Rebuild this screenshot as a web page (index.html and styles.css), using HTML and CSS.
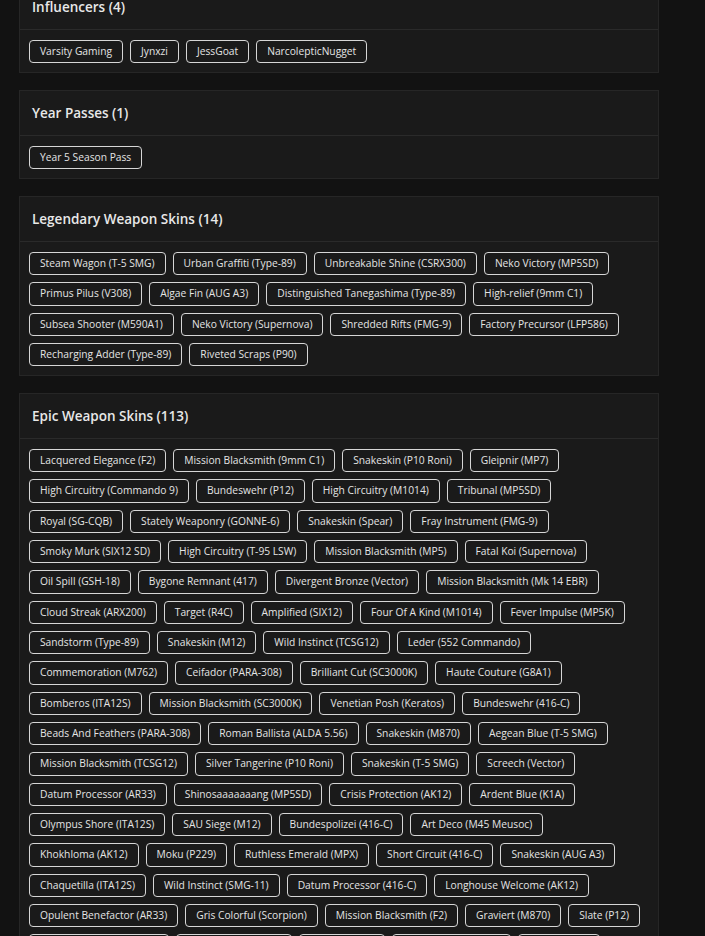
FILE: index.html
```html
<!DOCTYPE html>
<html lang="en">
<head>
  <meta charset="UTF-8" />
  <meta name="viewport" content="width=device-width, initial-scale=1.0" />
  <title>Inventory</title>
  <link rel="stylesheet" href="styles.css">
</head>
<body>
  <div class="wrap">

    <div class="card">
      <div class="card-head"><h2>Influencers (4)</h2></div>
      <div class="tags">
        <span class="tag">Varsity Gaming</span>
        <span class="tag">Jynxzi</span>
        <span class="tag">JessGoat</span>
        <span class="tag">NarcolepticNugget</span>
      </div>
    </div>

    <div class="card">
      <div class="card-head"><h2>Year Passes (1)</h2></div>
      <div class="tags">
        <span class="tag">Year 5 Season Pass</span>
      </div>
    </div>

    <div class="card">
      <div class="card-head"><h2>Legendary Weapon Skins (14)</h2></div>
      <div class="tags">
        <span class="tag">Steam Wagon (T-5 SMG)</span>
        <span class="tag">Urban Graffiti (Type-89)</span>
        <span class="tag">Unbreakable Shine (CSRX300)</span>
        <span class="tag">Neko Victory (MP5SD)</span>
        <span class="tag">Primus Pilus (V308)</span>
        <span class="tag">Algae Fin (AUG A3)</span>
        <span class="tag">Distinguished Tanegashima (Type-89)</span>
        <span class="tag">High-relief (9mm C1)</span>
        <span class="tag">Subsea Shooter (M590A1)</span>
        <span class="tag">Neko Victory (Supernova)</span>
        <span class="tag">Shredded Rifts (FMG-9)</span>
        <span class="tag">Factory Precursor (LFP586)</span>
        <span class="tag">Recharging Adder (Type-89)</span>
        <span class="tag">Riveted Scraps (P90)</span>
      </div>
    </div>

    <div class="card">
      <div class="card-head"><h2>Epic Weapon Skins (113)</h2></div>
      <div class="tags">
        <span class="tag">Lacquered Elegance (F2)</span>
        <span class="tag">Mission Blacksmith (9mm C1)</span>
        <span class="tag">Snakeskin (P10 Roni)</span>
        <span class="tag">Gleipnir (MP7)</span>
        <span class="tag">High Circuitry (Commando 9)</span>
        <span class="tag">Bundeswehr (P12)</span>
        <span class="tag">High Circuitry (M1014)</span>
        <span class="tag">Tribunal (MP5SD)</span>
        <span class="tag">Royal (SG-CQB)</span>
        <span class="tag">Stately Weaponry (GONNE-6)</span>
        <span class="tag">Snakeskin (Spear)</span>
        <span class="tag">Fray Instrument (FMG-9)</span>
        <span class="tag">Smoky Murk (SIX12 SD)</span>
        <span class="tag">High Circuitry (T-95 LSW)</span>
        <span class="tag">Mission Blacksmith (MP5)</span>
        <span class="tag">Fatal Koi (Supernova)</span>
        <span class="tag">Oil Spill (GSH-18)</span>
        <span class="tag">Bygone Remnant (417)</span>
        <span class="tag">Divergent Bronze (Vector)</span>
        <span class="tag">Mission Blacksmith (Mk 14 EBR)</span>
        <span class="tag">Cloud Streak (ARX200)</span>
        <span class="tag">Target (R4C)</span>
        <span class="tag">Amplified (SIX12)</span>
        <span class="tag">Four Of A Kind (M1014)</span>
        <span class="tag">Fever Impulse (MP5K)</span>
        <span class="tag">Sandstorm (Type-89)</span>
        <span class="tag">Snakeskin (M12)</span>
        <span class="tag">Wild Instinct (TCSG12)</span>
        <span class="tag">Leder (552 Commando)</span>
        <span class="tag">Commemoration (M762)</span>
        <span class="tag">Ceifador (PARA-308)</span>
        <span class="tag">Brilliant Cut (SC3000K)</span>
        <span class="tag">Haute Couture (G8A1)</span>
        <span class="tag">Bomberos (ITA12S)</span>
        <span class="tag">Mission Blacksmith (SC3000K)</span>
        <span class="tag">Venetian Posh (Keratos)</span>
        <span class="tag">Bundeswehr (416-C)</span>
        <span class="tag">Beads And Feathers (PARA-308)</span>
        <span class="tag">Roman Ballista (ALDA 5.56)</span>
        <span class="tag">Snakeskin (M870)</span>
        <span class="tag">Aegean Blue (T-5 SMG)</span>
        <span class="tag">Mission Blacksmith (TCSG12)</span>
        <span class="tag">Silver Tangerine (P10 Roni)</span>
        <span class="tag">Snakeskin (T-5 SMG)</span>
        <span class="tag">Screech (Vector)</span>
        <span class="tag">Datum Processor (AR33)</span>
        <span class="tag">Shinosaaaaaaang (MP5SD)</span>
        <span class="tag">Crisis Protection (AK12)</span>
        <span class="tag">Ardent Blue (K1A)</span>
        <span class="tag">Olympus Shore (ITA12S)</span>
        <span class="tag">SAU Siege (M12)</span>
        <span class="tag">Bundespolizei (416-C)</span>
        <span class="tag">Art Deco (M45 Meusoc)</span>
        <span class="tag">Khokhloma (AK12)</span>
        <span class="tag">Moku (P229)</span>
        <span class="tag">Ruthless Emerald (MPX)</span>
        <span class="tag">Short Circuit (416-C)</span>
        <span class="tag">Snakeskin (AUG A3)</span>
        <span class="tag">Chaquetilla (ITA12S)</span>
        <span class="tag">Wild Instinct (SMG-11)</span>
        <span class="tag">Datum Processor (416-C)</span>
        <span class="tag">Longhouse Welcome (AK12)</span>
        <span class="tag">Opulent Benefactor (AR33)</span>
        <span class="tag">Gris Colorful (Scorpion)</span>
        <span class="tag">Mission Blacksmith (F2)</span>
        <span class="tag">Graviert (M870)</span>
        <span class="tag">Slate (P12)</span>
        <span class="tag">Bygone Remnant (Spear)</span>
        <span class="tag">Snakeskin (SMG-12)</span>
        <span class="tag">Gleipnir (P90)</span>
        <span class="tag">Cloud Streak (SR-25)</span>
        <span class="tag">Fatal Koi (F2)</span>
      </div>
    </div>

  </div>
</body>
</html>
```

FILE: styles.css
```css
*{box-sizing:border-box;margin:0;padding:0}
body{background:#121212;color:#e6e6e6;font-family:"Open Sans",sans-serif}
.wrap{width:659px;padding-left:19px;margin-top:-16px}
.card{background:#1a1a1a;border:1px solid #262626;margin-bottom:17px}
.card-head{padding:12px 12px;border-bottom:1px solid #2a2a2a}
.card-head h2{font-size:13.5px;font-weight:600;line-height:20px;color:#e8e8e8}
.tags{display:flex;flex-wrap:wrap;gap:7px;padding:10px 9px 8.67px}
.tag{display:inline-block;font-size:10.25px;line-height:15.33px;padding:3px 10px;
  border:1px solid #d6d6d6;border-radius:4px;color:#e4e4e4;white-space:nowrap}
```
